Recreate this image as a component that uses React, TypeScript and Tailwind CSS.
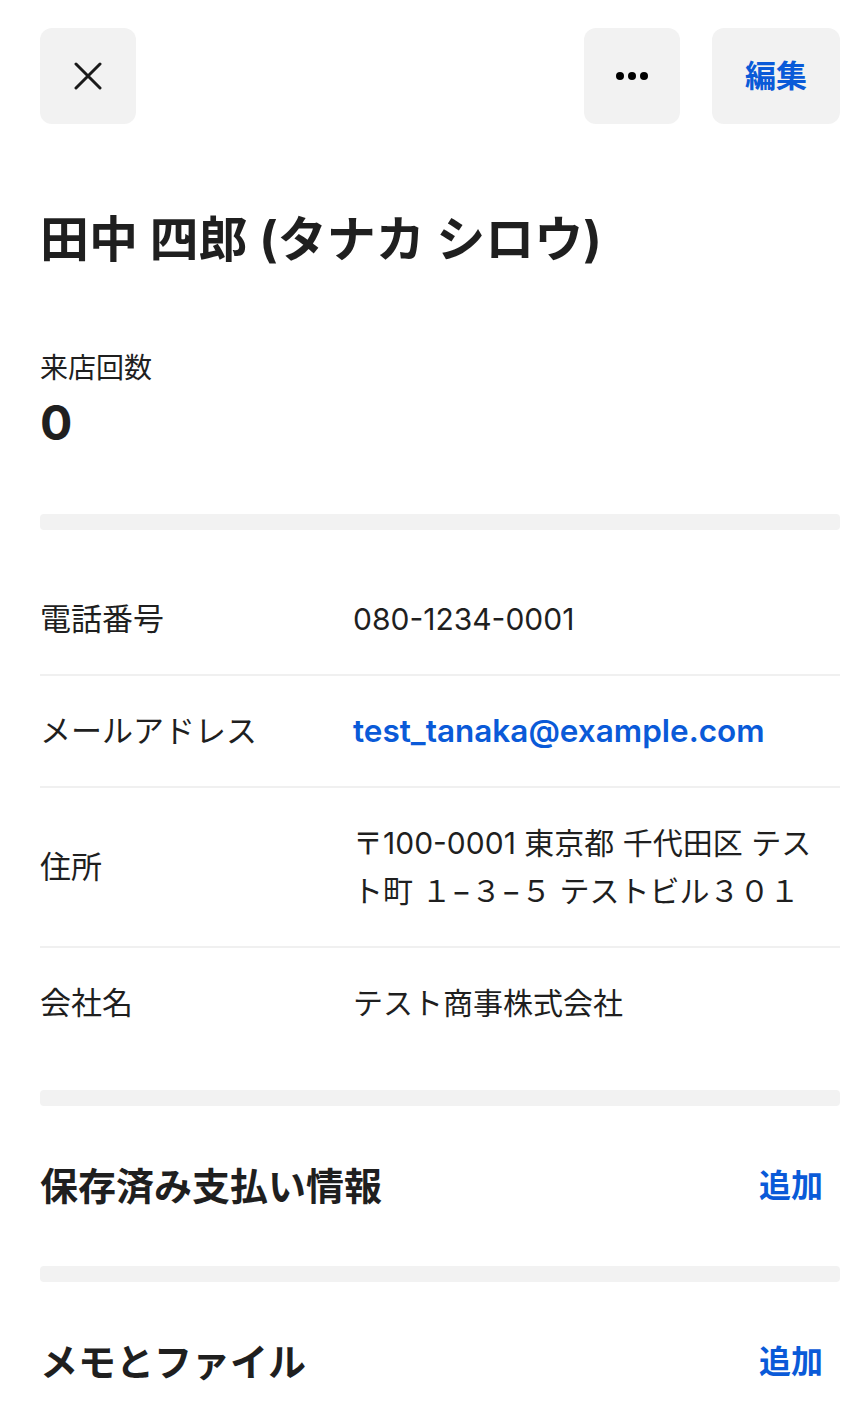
const font = "[font-family:Inter,'Noto_Sans_CJK_JP',sans-serif]";

interface InfoRowProps {
  label: string;
  children: React.ReactNode;
  last?: boolean;
}

function InfoRow({ label, children, last }: InfoRowProps) {
  return (
    <div className={`flex items-center py-[31px] ${last ? "" : "border-b-2 border-[#f0f0f0]"}`}>
      <div className="w-[313px] shrink-0 text-[31px] leading-[48px] text-[#1f1f1f]">{label}</div>
      <div className="flex-1 text-[30px] leading-[48px] text-[#1f1f1f]">{children}</div>
    </div>
  );
}

function SectionHeader({ title }: { title: string }) {
  return (
    <div className="flex items-center justify-between py-14">
      <h2 className="text-[38px] leading-[48px] font-bold text-[#1f1f1f]">{title}</h2>
      <button className="pr-[17px] text-[32px] leading-[48px] font-semibold text-[#0a5ad8]">追加</button>
    </div>
  );
}

function Bar() {
  return <div className="h-4 rounded bg-[#f2f2f2]" />;
}

function CloseIcon() {
  return (
    <svg width="28" height="28" viewBox="0 0 28 28" fill="none" stroke="#1a1a1a" strokeWidth="3" strokeLinecap="round">
      <path d="M2 2 L26 26 M26 2 L2 26" />
    </svg>
  );
}

export default function App() {
  return (
    <div className={`min-h-screen bg-white pl-10 pr-7 pt-7 ${font}`}>
      <div className="flex items-center justify-between">
        <button className="flex h-24 w-24 items-center justify-center rounded-xl bg-[#f2f2f2]">
          <CloseIcon />
        </button>
        <div className="flex gap-8">
          <button className="flex h-24 w-24 items-center justify-center gap-1 rounded-xl bg-[#f2f2f2]">
            <span className="h-2 w-2 rounded-full bg-black" />
            <span className="h-2 w-2 rounded-full bg-black" />
            <span className="h-2 w-2 rounded-full bg-black" />
          </button>
          <button className="flex h-24 w-32 items-center justify-center rounded-xl bg-[#f2f2f2] text-[31px] font-semibold text-[#0a5ad8]">
            編集
          </button>
        </div>
      </div>

      <h1 className="mt-[88px] text-[49px] leading-[56px] font-bold text-[#1f1f1f]">田中 四郎 (タナカ シロウ)</h1>

      <div className="mt-[82px]">
        <div className="text-[28px] leading-[36px] text-[#1f1f1f]">来店回数</div>
        <div className="mt-[9px] text-[48px] leading-[56px] font-bold text-[#1f1f1f]">0</div>
      </div>

      <div className="mt-[63px]">
        <Bar />
      </div>

      <div className="pt-[34px] pb-8">
        <InfoRow label="電話番号">080-1234-0001</InfoRow>
        <InfoRow label="メールアドレス">
          <span className="text-[31.5px] font-semibold text-[#0a5ad8]">test_tanaka@example.com</span>
        </InfoRow>
        <InfoRow label="住所">〒100-0001 東京都 千代田区 テスト町 １−３−５ テストビル３０１</InfoRow>
        <InfoRow label="会社名" last>テスト商事株式会社</InfoRow>
      </div>

      <Bar />
      <SectionHeader title="保存済み支払い情報" />
      <Bar />
      <SectionHeader title="メモとファイル" />
    </div>
  );
}
